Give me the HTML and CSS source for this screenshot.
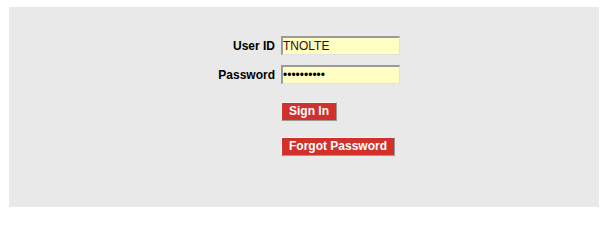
FILE: index.html
```html
<!DOCTYPE html>
<html>
<head>
<meta charset="utf-8">
<link rel="stylesheet" href="styles.css">
</head>
<body>
<div class="panel">
  <form class="login">
    <label class="lbl" for="uid">User ID</label>
    <input class="field field-uid" id="uid" type="text" value="TNOLTE">
    <label class="lbl row2" for="pwd">Password</label>
    <input class="field field-pwd row2" id="pwd" type="password" value="abcdefghij">
    <span class="row3"></span>
    <button class="btn row3" type="button">Sign In</button>
    <span class="row4"></span>
    <button class="btn row4" type="button">Forgot Password</button>
  </form>
</div>
</body>
</html>
```

FILE: styles.css
```css
html, body {
  margin: 0;
  padding: 0;
  background: #ffffff;
}
body {
  font-family: "Liberation Sans", Arial, sans-serif;
}
.panel {
  margin: 7px 8px 0 9px;
  width: 590px;
  height: 200px;
  box-sizing: border-box;
  padding-top: 29px;
  background: #e9e9e9;
}
.login {
  display: grid;
  grid-template-columns: 266px auto;
  column-gap: 6px;
  align-items: center;
  justify-items: start;
  margin: 0;
}
.lbl {
  justify-self: end;
  font-size: 12px;
  font-weight: bold;
  color: #000;
}
.field {
  box-sizing: border-box;
  width: 119px;
  height: 19px;
  margin: 0;
  padding: 0;
  border-style: solid;
  border-width: 2px 1px 1px 2px;
  border-color: #9a9a9a #e2e2e2 #e2e2e2 #9a9a9a;
  background: #ffffc4;
  font-family: "Liberation Sans", Arial, sans-serif;
  font-size: 12px;
  outline: none;
}
.field-uid {
  color: #3a0606;
}
.field-pwd {
  color: #000;
}
.row2 {
  margin-top: 10px;
}
.row3 {
  margin-top: 18px;
}
.row4 {
  margin-top: 16px;
}
.btn {
  box-sizing: border-box;
  height: 19px;
  padding: 0 7px;
  border-style: solid;
  border-width: 1px;
  border-color: #f4f4f4 #9a9a9a #9a9a9a #f4f4f4;
  background: #d2302b;
  color: #ffffff;
  font-family: "Liberation Sans", Arial, sans-serif;
  font-size: 12px;
  font-weight: bold;
  line-height: 17px;
  cursor: pointer;
}
```
